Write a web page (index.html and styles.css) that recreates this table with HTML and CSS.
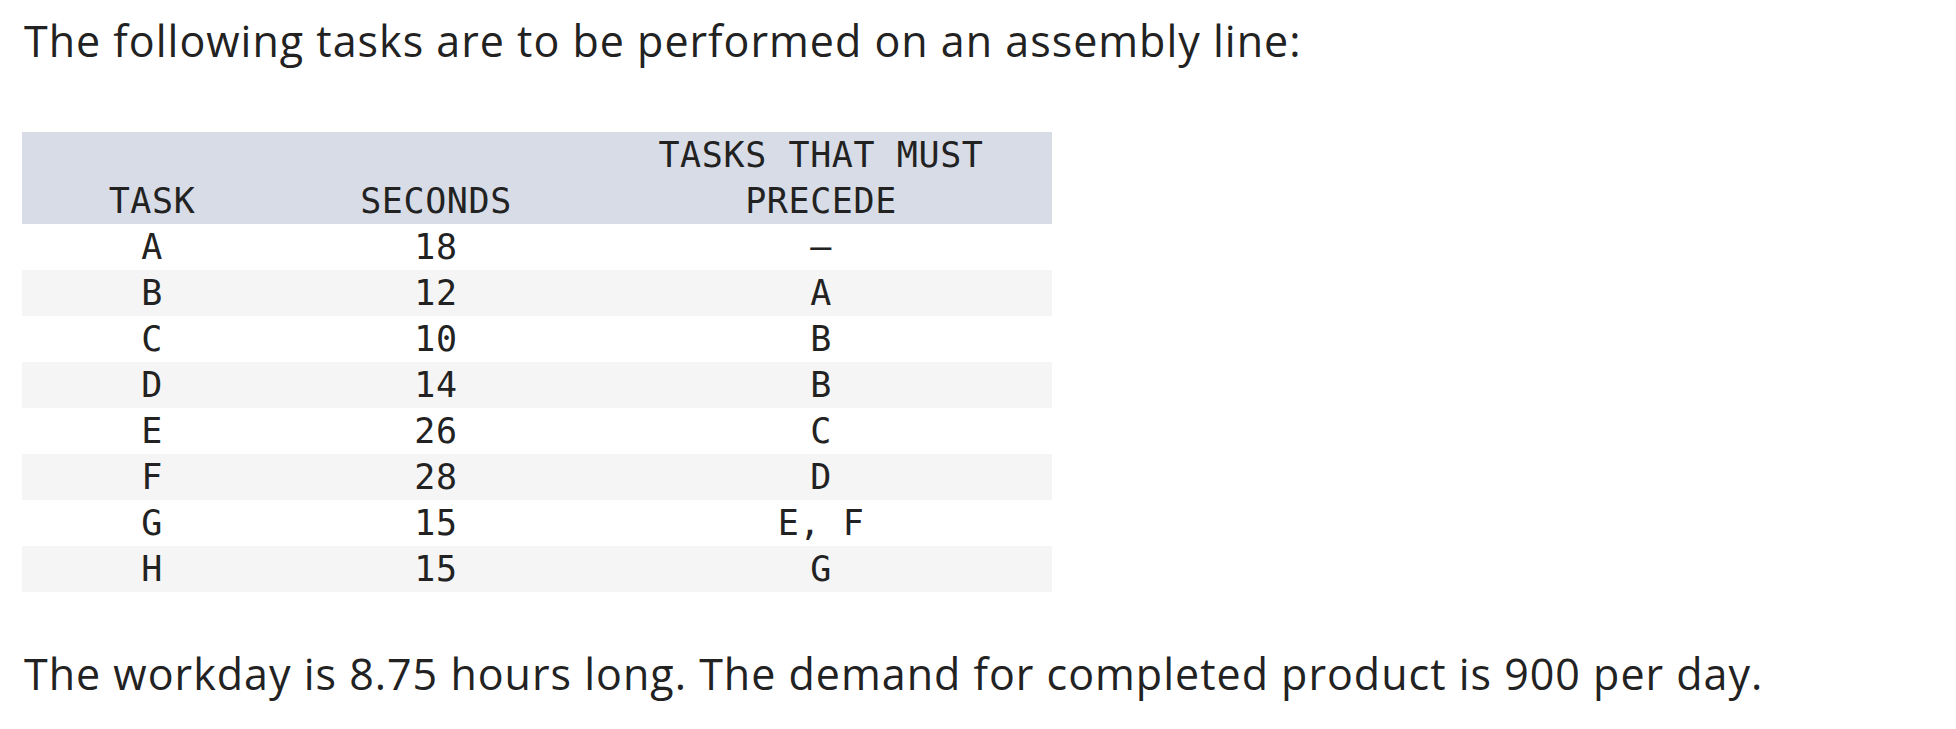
FILE: index.html
```html
<!DOCTYPE html>
<html>
<head>
<meta charset="utf-8">
<link rel="stylesheet" href="styles.css">
</head>
<body>
<p class="intro">The following tasks are to be performed on an assembly line:</p>
<table class="tasks">
  <thead>
    <tr>
      <th class="c1">TASK</th>
      <th class="c2">SECONDS</th>
      <th class="c3">TASKS THAT MUST<br>PRECEDE</th>
    </tr>
  </thead>
  <tbody>
    <tr><td>A</td><td>18</td><td>—</td></tr>
    <tr><td>B</td><td>12</td><td>A</td></tr>
    <tr><td>C</td><td>10</td><td>B</td></tr>
    <tr><td>D</td><td>14</td><td>B</td></tr>
    <tr><td>E</td><td>26</td><td>C</td></tr>
    <tr><td>F</td><td>28</td><td>D</td></tr>
    <tr><td>G</td><td>15</td><td>E, F</td></tr>
    <tr><td>H</td><td>15</td><td>G</td></tr>
  </tbody>
</table>
<p class="outro">The workday is 8.75 hours long. The demand for completed product is 900 per day.</p>
</body>
</html>
```
FILE: styles.css
```css
html, body {
  margin: 0;
  padding: 0;
  background: #ffffff;
}
body {
  padding: 8px 22px 0;
  color: #222222;
  font-family: "Open Sans", "Noto Sans", sans-serif;
}
.intro, .outro {
  margin: 0;
  font-size: 43px;
  letter-spacing: 1px;
  line-height: 66px;
  padding-left: 2px;
}
.tasks {
  margin-top: 58px;
  border-collapse: collapse;
  table-layout: fixed;
  width: 1030px;
  font-family: "DejaVu Sans Mono", monospace;
  font-size: 35px;
  letter-spacing: 0.6px;
  line-height: 46px;
  color: #222222;
}
.tasks th, .tasks td {
  padding: 0;
  text-align: center;
  font-weight: normal;
}
.tasks th {
  vertical-align: bottom;
  background: #d8dce6;
}
.c1 { width: 260px; }
.c2 { width: 308px; }
.c3 { width: 462px; }
.tasks tbody tr:nth-child(even) td {
  background: #f5f5f5;
}
.outro {
  margin-top: 49px;
}
```
